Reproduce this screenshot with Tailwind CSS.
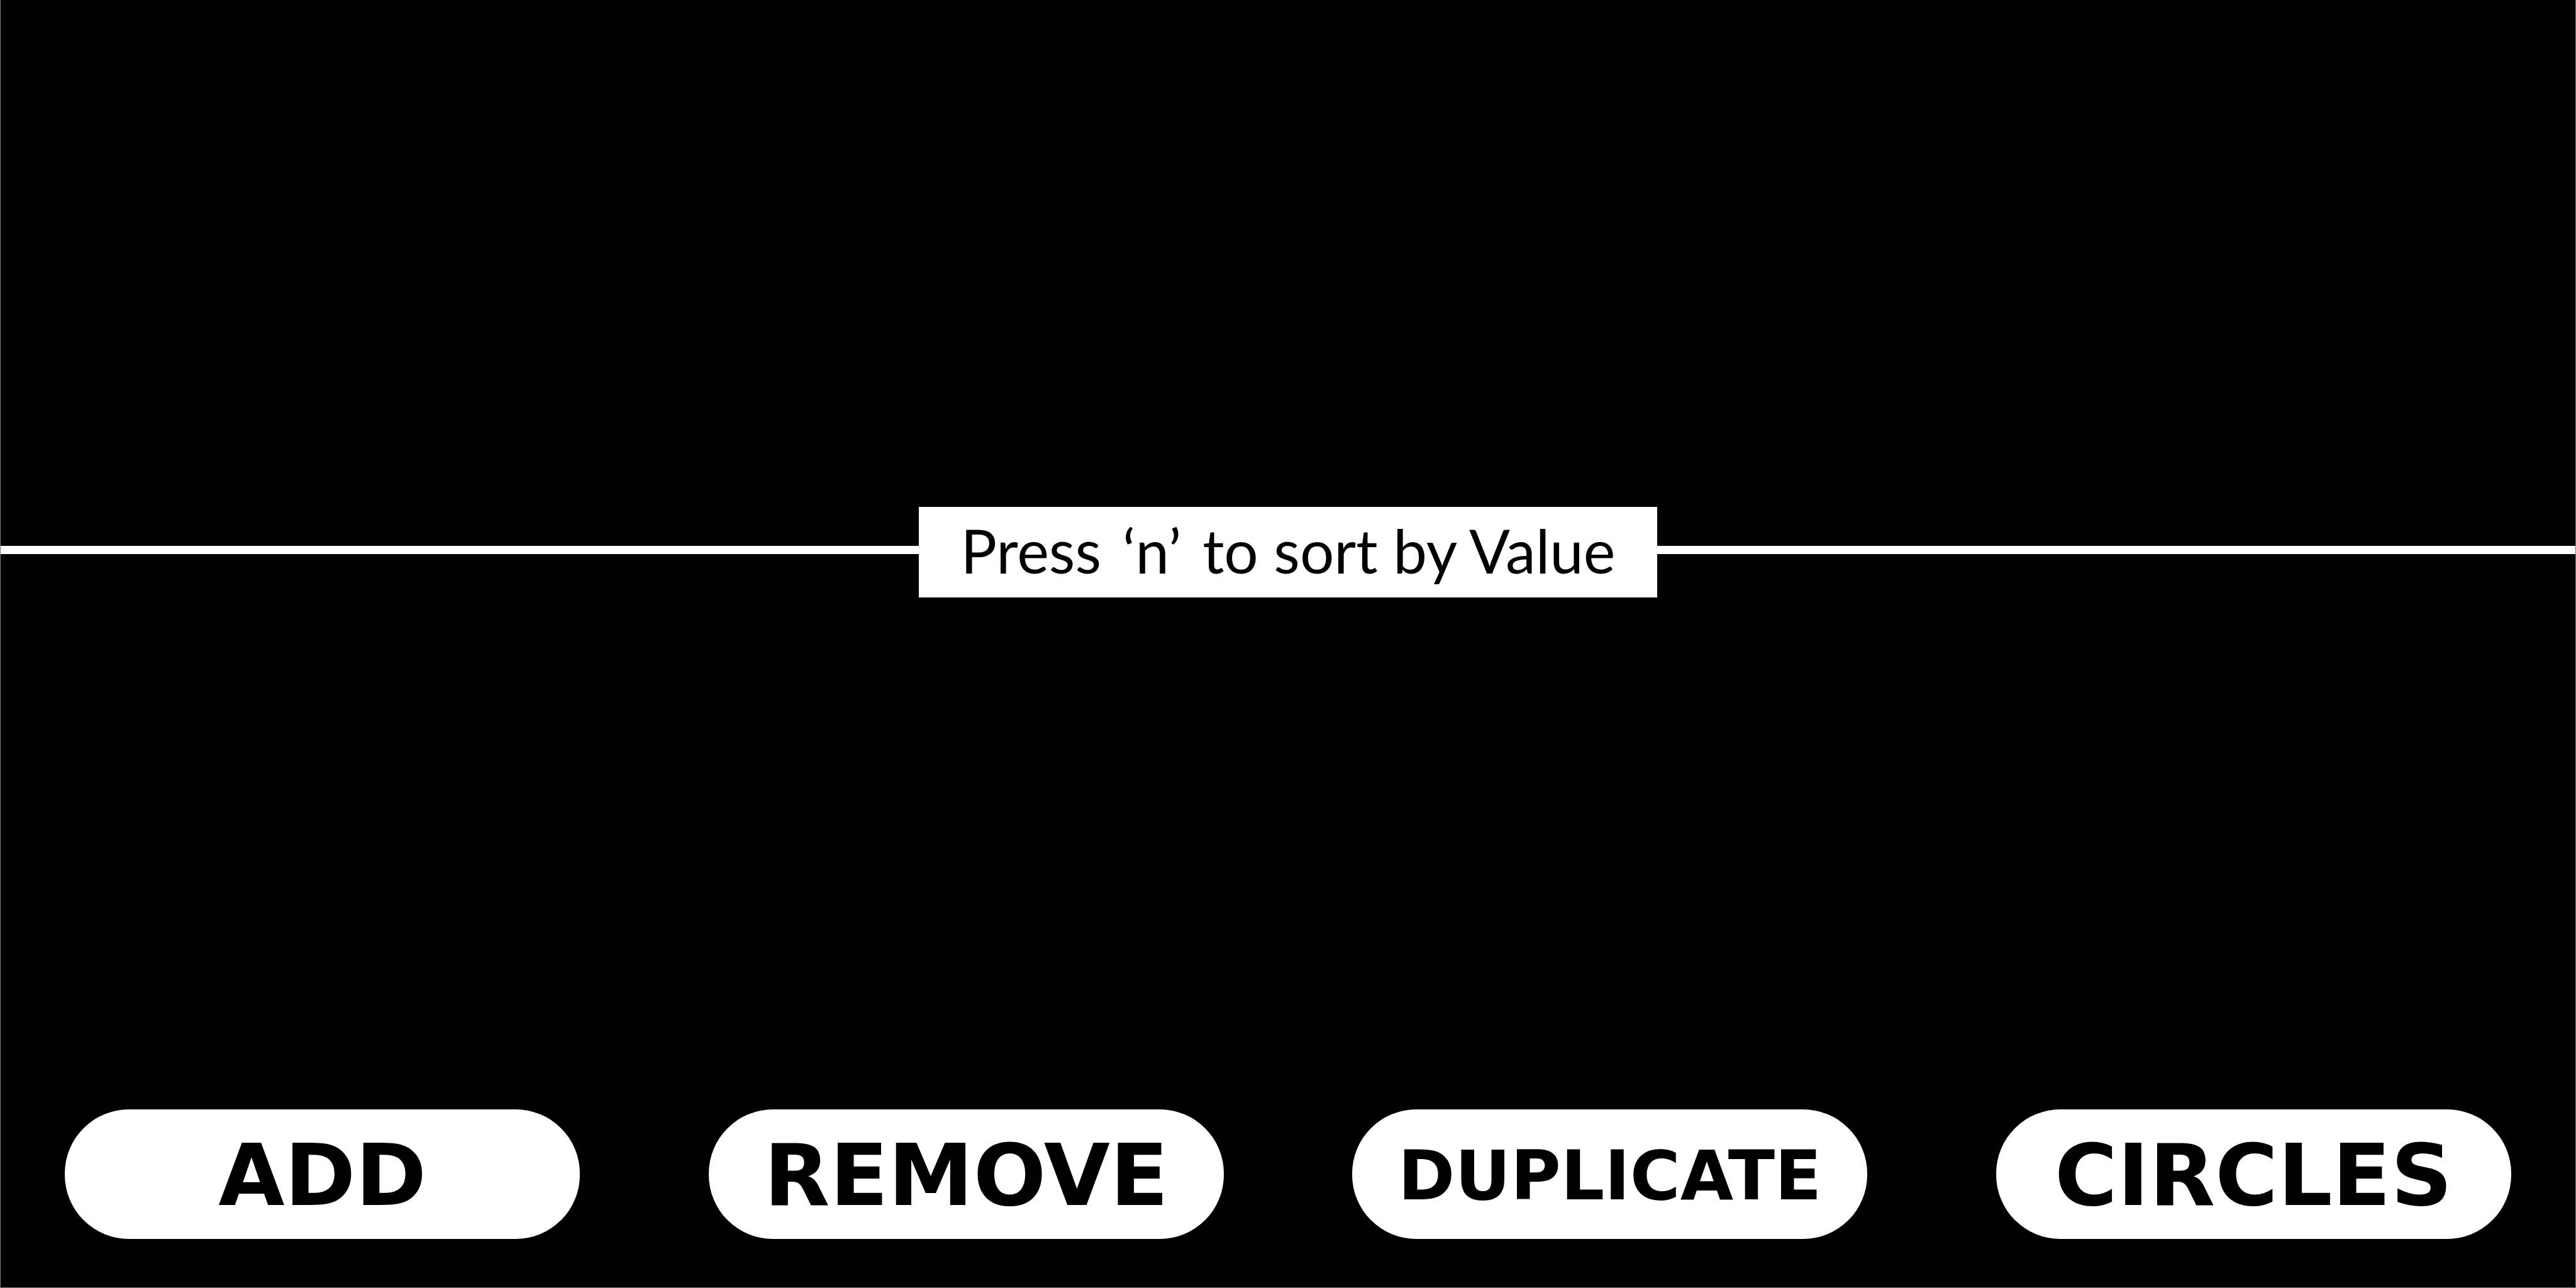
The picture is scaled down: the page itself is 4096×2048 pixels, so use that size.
<!DOCTYPE html>
<html lang="en">
<head>
<meta charset="utf-8">
<title>Sort by Value</title>
<script src="https://cdn.jsdelivr.net/npm/@tailwindcss/browser@4"></script>
</head>
<body class="flex min-h-screen flex-col justify-between border-x border-b border-[#808080] bg-black text-black">
  <main class="flex items-start pt-[806px]">
    <div class="mt-[62px] h-[13px] flex-1 bg-white"></div>
    <p class="flex h-[144px] gap-x-[34px] bg-white px-[66px] font-['Lato',sans-serif] text-[96px] leading-[138px] whitespace-nowrap">
      <span>Press</span>
      <span>‘n’</span>
      <span>to sort by Value</span>
    </p>
    <div class="mt-[62px] h-[13px] flex-1 bg-white"></div>
  </main>
  <nav class="grid grid-cols-4 gap-x-[5vw] px-[2.5vw] pb-[77px] font-['DejaVu_Sans',sans-serif] font-bold" aria-label="Actions">
    <button type="button" class="h-[206px] rounded-[102px] bg-white pt-1 text-[136px] leading-none">ADD</button>
    <button type="button" class="h-[206px] rounded-[102px] bg-white pt-1 text-[136px] leading-none">REMOVE</button>
    <button type="button" class="h-[206px] rounded-[102px] bg-white pt-1 text-[109px] leading-none">DUPLICATE</button>
    <button type="button" class="h-[206px] rounded-[102px] bg-white pt-1 text-[136px] leading-none">CIRCLES</button>
  </nav>
</body>
</html>
